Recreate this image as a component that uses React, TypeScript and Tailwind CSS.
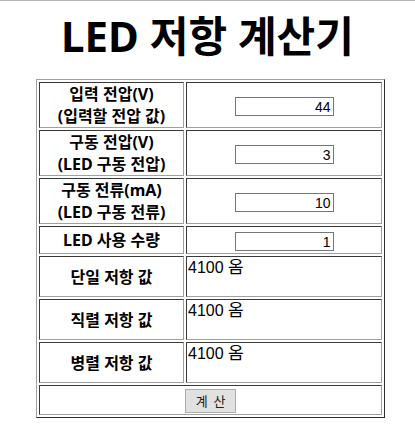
import React from "react"

type Row = {
  label: string[]
  kind: "input" | "result"
  value: string
  h: string
}

const rows: Row[] = [
  { label: ["입력 전압(V)", "(입력할 전압 값)"], kind: "input", value: "44", h: "h-[46px]" },
  { label: ["구동 전압(V)", "(LED 구동 전압)"], kind: "input", value: "3", h: "h-[46px]" },
  { label: ["구동 전류(mA)", "(LED 구동 전류)"], kind: "input", value: "10", h: "h-[46px]" },
  { label: ["LED 사용 수량"], kind: "input", value: "1", h: "h-[25px]" },
  { label: ["단일 저항 값"], kind: "result", value: "4100 옴", h: "h-[41px]" },
  { label: ["직렬 저항 값"], kind: "result", value: "4100 옴", h: "h-[41px]" },
  { label: ["병렬 저항 값"], kind: "result", value: "4100 옴", h: "h-[41px]" },
]

const cell = "border border-t-[#3a3a3a] border-l-[#3a3a3a] border-r-[#a0a0a0] border-b-[#a0a0a0] px-px"

export default function App() {
  return (
    <div className="min-h-[444px] bg-white text-black border-t border-[#b4b4b4] font-['Noto_Sans','Noto_Sans_CJK_KR',sans-serif]">
      <h1 className="h-[78px] pt-[10px] text-center text-[42px] font-bold leading-[50px]">LED 저항 계산기</h1>

      <table className="ml-[36px] w-[349px] border-separate border-spacing-[2px] border border-t-[#a0a0a0] border-l-[#a0a0a0] border-r-[#2e2e2e] border-b-[#2e2e2e]">
        <tbody>
          {rows.map((r, i) => (
            <tr key={i}>
              <td className={`${cell} ${r.h} w-[145px] py-0 text-center align-middle text-[16px] font-bold leading-[22px]`}>
                {r.label.map((l, j) => (
                  <div key={j}>{l}</div>
                ))}
              </td>
              {r.kind === "input" ? (
                <td className={`${cell} ${r.h} py-px text-center align-middle`}>
                  <input
                    defaultValue={r.value}
                    className="inline-block w-[99px] h-[19px] border border-[#767676] px-[2px] text-right align-middle text-[14px] leading-[15px] text-black font-['Liberation_Sans',sans-serif] outline-none"
                  />
                </td>
              ) : (
                <td className={`${cell} ${r.h} align-top pt-[1px] text-[16px] leading-[20px] font-['Liberation_Sans','Noto_Sans_CJK_KR',sans-serif]`}>
                  4100 <span className="text-[17px]">옴</span>
                </td>
              )}
            </tr>
          ))}
          <tr>
            <td colSpan={2} className={`${cell} h-[28px] py-px text-center align-middle`}>
              <button className="inline-flex items-center justify-center w-[51px] h-[24px] align-middle border border-[#adadad] bg-[#e1e1e1] text-[13px] text-[#222] font-['Noto_Sans_CJK_KR',sans-serif]">
                계&nbsp;&nbsp;산
              </button>
            </td>
          </tr>
        </tbody>
      </table>
    </div>
  )
}
